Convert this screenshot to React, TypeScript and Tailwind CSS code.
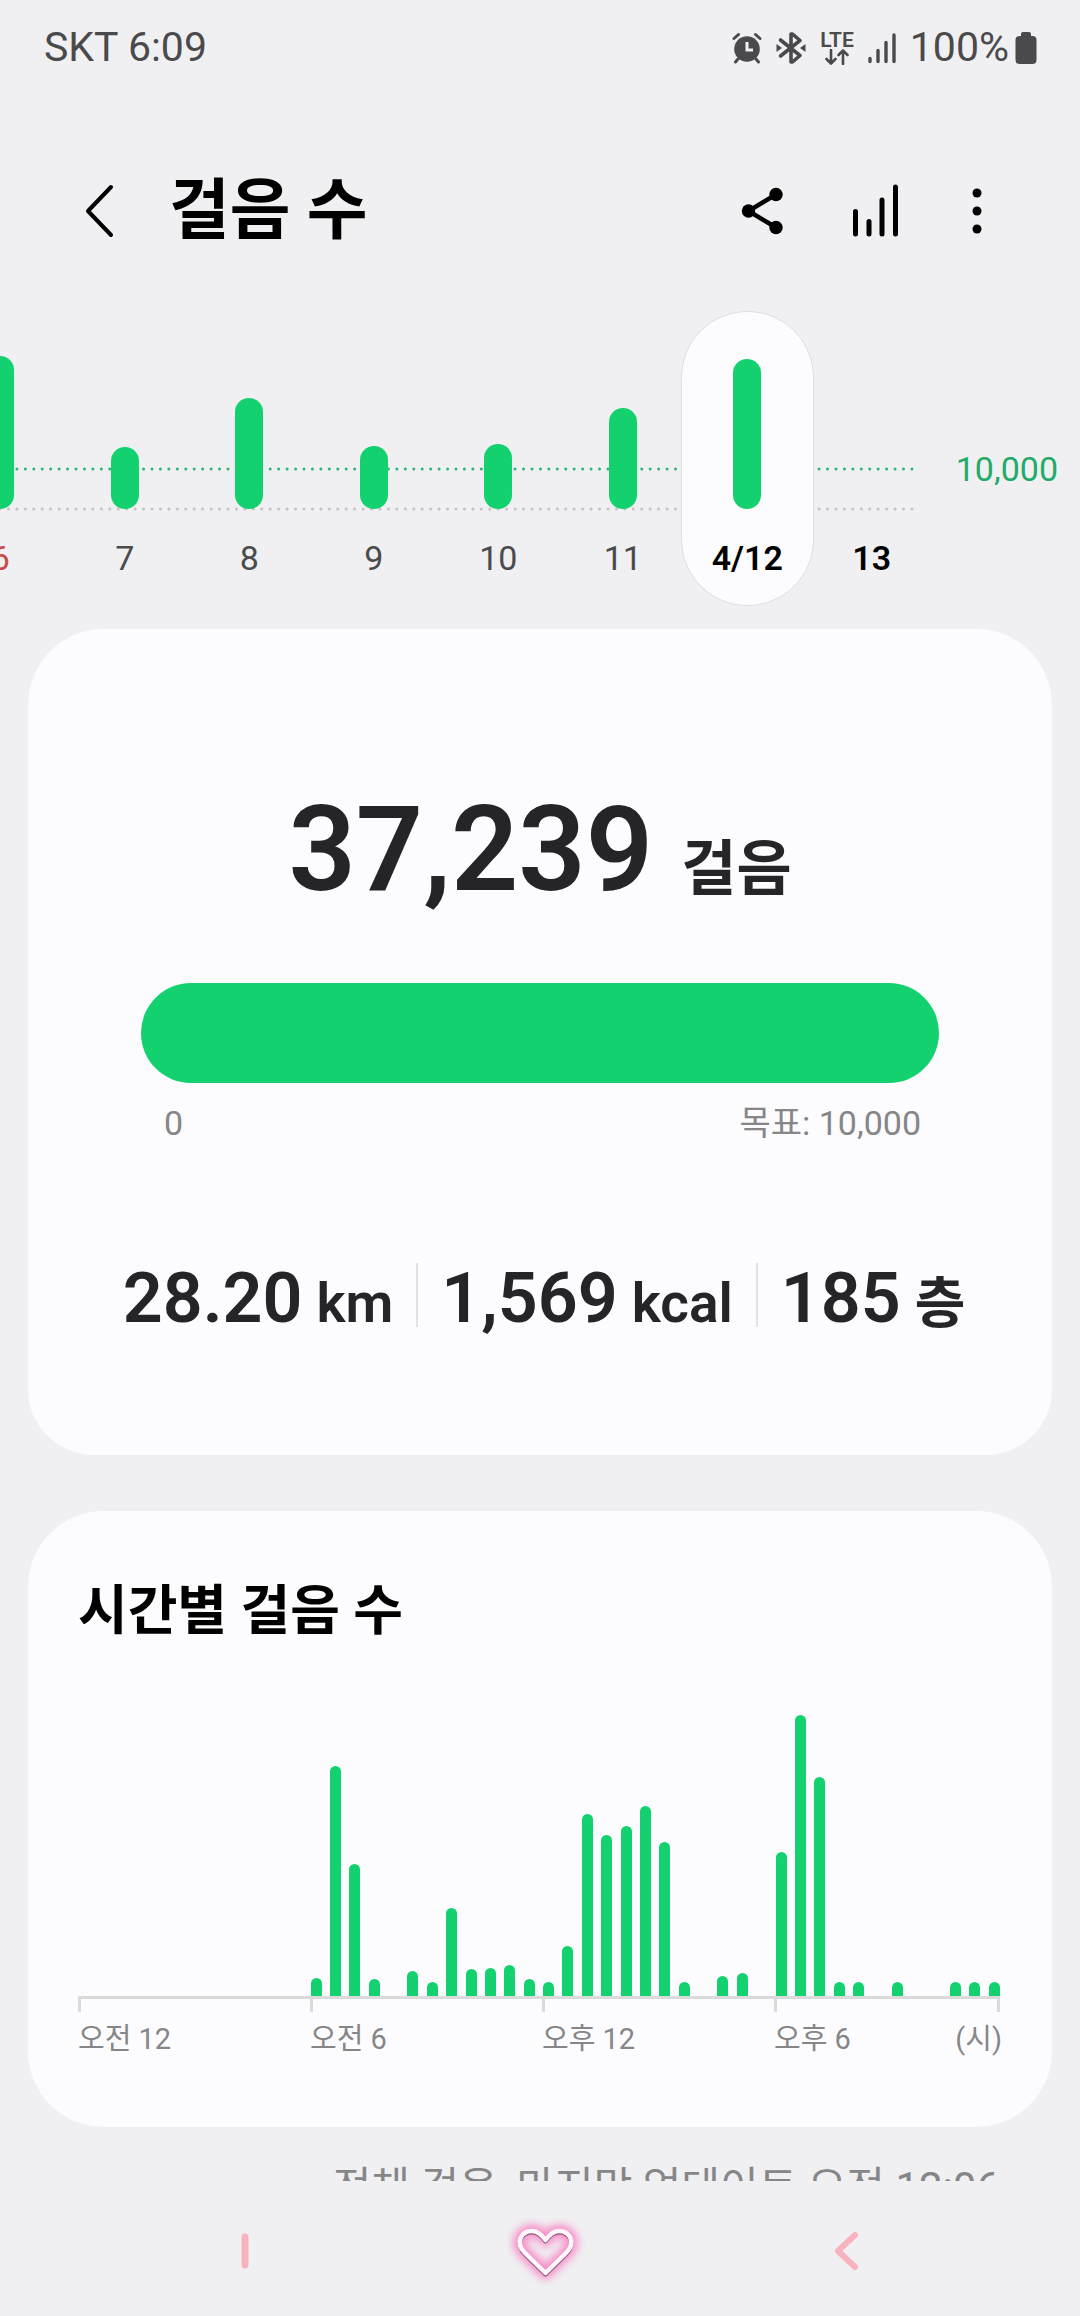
import React from "react";

const days = [
  { label: "6", height: 153, color: "text-[#c94a4a]" },
  { label: "7", height: 62, color: "text-[#4b4b4d]" },
  { label: "8", height: 111, color: "text-[#4b4b4d]" },
  { label: "9", height: 63, color: "text-[#4b4b4d]" },
  { label: "10", height: 65, color: "text-[#4b4b4d]" },
  { label: "11", height: 101, color: "text-[#4b4b4d]" },
  { label: "4/12", height: 150, color: "font-semibold text-black", selected: true },
  { label: "13", height: 0, color: "font-semibold text-black" },
];

// one value per half hour, starting at midnight
const halfHours = [
  0, 0, 0, 0, 0, 0, 0, 0, 0, 0, 0, 0, 18, 230, 132, 17, 0, 25, 14, 88, 27, 28,
  31, 17, 14, 50, 182, 161, 170, 190, 154, 14, 0, 20, 23, 0, 144, 281, 219, 14,
  14, 0, 14, 0, 0, 14, 14, 14,
];

const hourLabels = ["오전 12", "오전 6", "오후 12", "오후 6"];

const stats = [
  { value: "28.20", unit: "km" },
  { value: "1,569", unit: "kcal" },
  { value: "185", unit: "층" },
];

function StatusBar() {
  return (
    <div className="flex h-24 shrink-0 items-center justify-between pl-11 pr-[43px] text-[41px] text-[#4a4a4c]">
      <span>SKT 6:09</span>
      <div className="flex items-center">
        <svg width="30" height="32" viewBox="0 0 30 32" fill="none" stroke="currentColor" strokeLinecap="round">
          <circle cx="15" cy="17" r="12.800" fill="currentColor" stroke="none" />
          <path d="M2 6.500 6.500 2.500M28 6.500 23.500 2.500M6 27l-2.500 3M24 27l2.500 3" strokeWidth="3" />
          <path d="M15 10v8h6" stroke="#f0f0f2" strokeWidth="3" strokeLinecap="butt" />
        </svg>
        <svg className="ml-[14px]" width="30" height="34" viewBox="0 0 30 34" fill="none" stroke="currentColor">
          <path
            d="M4.500 9 24 24.500 16.500 31H15V3h1.500L24 9.500 4.500 25"
            strokeWidth="3.600"
            strokeLinejoin="round"
            strokeLinecap="round"
          />
          <path d="M0.500 13 6 17 0.500 21zM29.500 13 24 17 29.500 21z" fill="currentColor" stroke="none" />
        </svg>
        <div className="ml-[14px] flex flex-col items-center">
          <span className="text-[21px] font-semibold leading-[18px]">LTE</span>
          <svg width="26" height="16" viewBox="0 0 26 16" fill="none" stroke="currentColor" strokeWidth="2.600" strokeLinecap="round" strokeLinejoin="round">
            <path d="M7 1v13M2.500 10 7 14.500 11.500 10M19 15V2M14.500 6 19 1.500 23.500 6" />
          </svg>
        </div>
        <svg className="ml-[14px]" width="28" height="32" viewBox="0 0 28 32" stroke="currentColor" strokeWidth="3.400" strokeLinecap="round">
          <path d="M2 26.500v3M10 18.500v11M18 10.500v19M26 3v26.500" />
        </svg>
        <span className="ml-[14px]">100%</span>
        <svg className="ml-[6px]" width="22" height="34" viewBox="0 0 22 34" fill="currentColor">
          <rect x="6" y="1" width="10" height="8" rx="2" />
          <rect x="0.500" y="5" width="21" height="28" rx="4" />
        </svg>
      </div>
    </div>
  );
}

function Header() {
  return (
    <header className="mt-[55px] flex h-[120px] shrink-0 items-center pl-[83px] pr-[90px]">
      <button type="button" aria-label="뒤로">
        <svg width="32" height="56" viewBox="0 0 32 56" fill="none" stroke="black" strokeWidth="4" strokeLinecap="round" strokeLinejoin="round">
          <path d="M28 4 5 28 28 52" />
        </svg>
      </button>
      <h1 className="ml-[54px] grow text-[66px] font-bold leading-[80px] text-black">걸음 수</h1>
      <button type="button" aria-label="공유">
        <svg width="42" height="50" viewBox="0 0 42 50">
          <path d="M35 8.500 7.500 25 35 41.500" fill="none" stroke="black" strokeWidth="4.500" />
          <circle cx="35" cy="8.500" r="6.700" />
          <circle cx="7.500" cy="25" r="6.700" />
          <circle cx="35" cy="41.500" r="6.700" />
        </svg>
      </button>
      <button type="button" aria-label="차트" className="ml-[69px]">
        <svg width="48" height="56" viewBox="0 0 48 56" stroke="black" strokeWidth="5" strokeLinecap="round">
          <path d="M3.500 28.500V51M17 38.500V51M30 17V51M43.500 4V51" />
        </svg>
      </button>
      <button type="button" aria-label="더보기" className="ml-[64px]">
        <svg width="26" height="50" viewBox="0 0 26 50">
          <circle cx="13" cy="7" r="4.500" />
          <circle cx="13" cy="25" r="4.500" />
          <circle cx="13" cy="43" r="4.500" />
        </svg>
      </button>
    </header>
  );
}

function WeekChart() {
  return (
    <section className="relative mt-10 flex shrink-0 overflow-hidden">
      <svg className="absolute left-0 top-0 h-full w-[916px]" strokeWidth="3" strokeLinecap="round" strokeDasharray="0 8.444">
        <line x1="0" x2="915" y1="158" y2="158" stroke="#2bb573" />
        <line x1="0" x2="915" y1="198" y2="198" stroke="#c4c4c6" />
      </svg>
      <ol className="relative -ml-[62px] grid grow grid-cols-8">
        {days.map((day) => (
          <li key={day.label} className={day.selected ? "-mx-1" : ""}>
            <button
              type="button"
              className={`flex h-[295px] w-full flex-col items-center rounded-full ${
                day.selected ? "border border-[#dededf] bg-[#fcfcfe]" : "border border-transparent"
              }`}
            >
              <span className="flex h-[197px] items-end">
                <span className="w-7 rounded-full bg-[#12d16e]" style={{ height: day.height }} />
              </span>
              <span className={`mt-[29px] text-[34px] leading-10 ${day.color}`}>{day.label}</span>
            </button>
          </li>
        ))}
      </ol>
      <span className="w-[146px] pr-[22px] pt-[138px] text-right text-[34px] leading-10 text-[#22ab68]">
        10,000
      </span>
    </section>
  );
}

function TodayCard() {
  return (
    <section className="mx-7 mt-[23px] shrink-0 rounded-b-[66px] rounded-t-[76px] bg-[#fcfcfe] pb-[128px] pt-[161px] text-[#252527]">
      <div className="flex items-baseline justify-center gap-7 font-semibold">
        <span className="text-[118px] leading-[120px]">37,239</span>
        <span className="text-[60px] font-bold leading-[64px]">걸음</span>
      </div>
      <div className="mx-[113px] mt-[73px] h-[100px] rounded-full bg-[#12d16e]" />
      <div className="mt-5 flex justify-between pl-[136px] pr-[131px] text-[34px] leading-10 text-[#868688]">
        <span>0</span>
        <span>목표: 10,000</span>
      </div>
      <ul className="mt-[120px] flex justify-center divide-x-2 divide-[#e2e2e4] pl-2 font-semibold">
        {stats.map((stat) => (
          <li key={stat.unit} className="flex h-16 items-baseline gap-[14px] px-[23px] leading-[70px]">
            <span className="text-[70px]">{stat.value}</span>
            <span className="text-[55px]">{stat.unit}</span>
          </li>
        ))}
      </ul>
    </section>
  );
}

function HourlyCard() {
  return (
    <section className="mx-7 mt-14 shrink-0 rounded-[76px] bg-[#fcfcfe] px-[50px] pb-[68px] pt-[69px]">
      <h2 className="text-[54px] font-bold leading-[64px] text-black">시간별 걸음 수</h2>
      <div className="mr-[2px] mt-[62px] flex h-[290px] items-end justify-between">
        {halfHours.map((height, i) => (
          <div key={i} className="w-[11px] rounded-t-full bg-[#12d16e]" style={{ height }} />
        ))}
      </div>
      <div className="mr-[2px] flex h-4 border-r-[3px] border-t-[3px] border-[#dadadb]">
        {hourLabels.map((label) => (
          <div key={label} className="w-[232px] shrink-0 border-l-[3px] border-[#dadadb] last:shrink" />
        ))}
      </div>
      <div className="mt-[7px] flex text-[29px] leading-10 text-[#868688]">
        {hourLabels.map((label, i) => (
          <div key={label} className="flex w-[232px] shrink-0 justify-between last:shrink">
            <span>{label}</span>
            {i === hourLabels.length - 1 && <span>(시)</span>}
          </div>
        ))}
      </div>
    </section>
  );
}

function NavBar() {
  return (
    <nav className="flex h-[135px] shrink-0 items-center justify-between pl-[226px] pr-[214px] pt-[5px]">
      <button type="button" aria-label="최근 앱">
        <svg width="38" height="40" viewBox="0 0 38 40" stroke="#f9b3bf" strokeWidth="7" strokeLinecap="round">
          <path d="M19 6v28" />
        </svg>
      </button>
      <button type="button" aria-label="홈">
        <svg width="90" height="90" viewBox="0 0 90 90" fill="none" strokeLinejoin="round">
          <defs>
            <filter id="glow" x="-30%" y="-30%" width="160%" height="160%">
              <feGaussianBlur stdDeviation="4" />
            </filter>
            <filter id="shade" x="-10%" y="-10%" width="120%" height="120%">
              <feGaussianBlur stdDeviation="0.700" />
            </filter>
            <path
              id="heart"
              d="M45.500 67 25 47C14 36 22 25 32 25c6 0 9.500 3.500 13.500 9 4-5.500 7.500-9 13.500-9 10 0 18 11 7 22z"
            />
          </defs>
          <use href="#heart" stroke="#f78cc8" strokeWidth="13" filter="url(#glow)" />
          <use href="#heart" y="1.500" stroke="#8a5478" strokeWidth="4" filter="url(#shade)" />
          <use href="#heart" stroke="#fff7fc" strokeWidth="4.500" />
        </svg>
      </button>
      <button type="button" aria-label="뒤로 가기">
        <svg width="40" height="44" viewBox="0 0 40 44" fill="none" stroke="#f9b3bf" strokeWidth="6" strokeLinecap="round" strokeLinejoin="round">
          <path d="M29 6 12 22l17 16" />
        </svg>
      </button>
    </nav>
  );
}

export default function App() {
  return (
    <div className="flex h-screen w-full flex-col overflow-hidden bg-[#f0f0f2] font-['Roboto','Noto_Sans_CJK_KR',sans-serif]">
      <StatusBar />
      <main className="flex min-h-0 grow flex-col overflow-hidden">
        <Header />
        <WeekChart />
        <TodayCard />
        <HourlyCard />
        <p className="mt-[37px] shrink-0 pr-20 text-right text-[42px] leading-[48px] text-[#868688]">
          전체 걸음, 마지막 업데이트 오전 12:06
        </p>
      </main>
      <NavBar />
    </div>
  );
}
